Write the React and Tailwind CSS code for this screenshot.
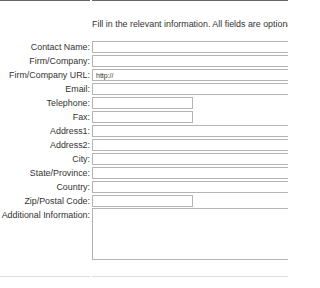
const fields = [
  { label: 'Contact Name:', size: 'wide' },
  { label: 'Firm/Company:', size: 'wide' },
  { label: 'Firm/Company URL:', size: 'wide', value: 'http://' },
  { label: 'Email:', size: 'wide' },
  { label: 'Telephone:', size: 'short' },
  { label: 'Fax:', size: 'short' },
  { label: 'Address1:', size: 'wide' },
  { label: 'Address2:', size: 'wide' },
  { label: 'City:', size: 'wide' },
  { label: 'State/Province:', size: 'wide' },
  { label: 'Country:', size: 'wide' },
  { label: 'Zip/Postal Code:', size: 'short' },
]

function Field({ label, size, value }) {
  return (
    <>
      <div className="flex h-[14px] items-center justify-end whitespace-nowrap">{label}</div>
      <div className="flex h-[14px] items-center">
        <div
          className={`flex h-[12px] items-center border border-[#b4b4b4] bg-white pl-[3px] text-[7px] text-[#333] ${
            size === 'short' ? 'w-[101px]' : 'w-[260px]'
          }`}
        >
          {value}
        </div>
      </div>
    </>
  )
}

export default function App() {
  return (
    <div className="h-[288px] w-[288px] overflow-hidden bg-white font-['Liberation_Sans',Arial,sans-serif] text-[8.9px] leading-none text-[#333]">
      <div className="grid w-[360px] grid-cols-[90px_268px] gap-x-[2px]">
        <div className="border-t border-[#666]" />
        <div className="border-t border-[#666]" />
        <div className="h-[39px]" />
        <div className="h-[39px] pt-[19px] whitespace-nowrap">
          Fill in the relevant information. All fields are optional.
        </div>
        {fields.map((f) => (
          <Field key={f.label} {...f} />
        ))}
        <div className="flex h-[14px] items-center justify-end whitespace-nowrap">Additional Information:</div>
        <div className="h-[52px] w-[260px] border border-[#b4b4b4] bg-white" />
        <div className="col-span-2 h-[16px]" />
        <div className="border-t border-[#ddd]" />
        <div className="border-t border-[#ddd]" />
      </div>
    </div>
  )
}
